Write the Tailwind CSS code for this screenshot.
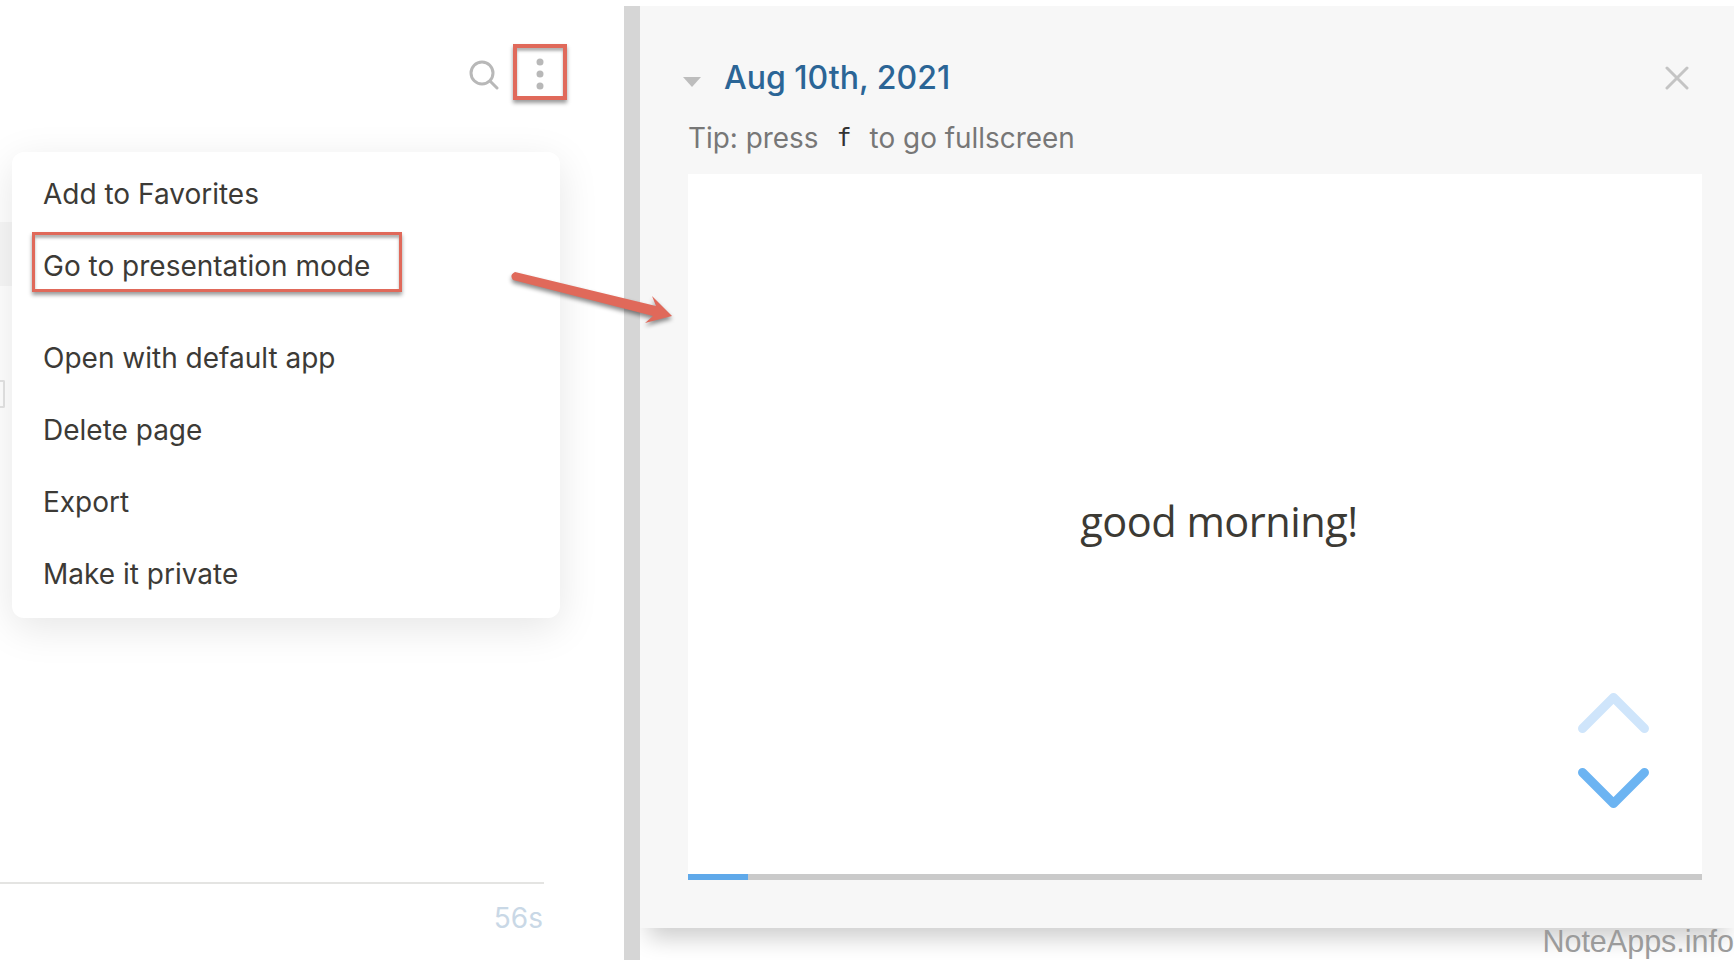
<!doctype html>
<html>
<head>
<meta charset="utf-8">
<script src="https://cdn.jsdelivr.net/npm/@tailwindcss/browser@4"></script>
</head>
<body class="bg-white">
<div class="relative flex h-[960px] w-[1734px] overflow-hidden bg-white font-['Inter',sans-serif]">
  <!-- left page -->
  <div class="flex h-full w-[624px] flex-col">
    <div class="flex h-[144px] items-start justify-end pt-[44px]">
      <div class="flex items-center gap-[12px] pr-[57px]">
        <svg class="h-[36px] w-[36px]" viewBox="0 0 36 36" fill="none" stroke="#b8b8b8" stroke-width="3" stroke-linecap="round"><circle cx="17" cy="19" r="11"/><path d="M25 27 L32 34"/></svg>
        <svg class="h-[56px] w-[54px]" viewBox="0 0 54 56" fill="#b8b8b8"><circle cx="27" cy="18" r="3.500"/><circle cx="27" cy="30" r="3.500"/><circle cx="27" cy="42" r="3.500"/></svg>
      </div>
    </div>
    <div class="h-[78px]"></div>
    <div class="h-[64px] w-[12px] bg-[#f7f7f7]"></div>
    <div class="h-[94px]"></div>
    <div class="h-[28px] w-[5px] rounded-r-[2px] border-2 border-l-0 border-[#e4e4e4]"></div>
    <div class="grow"></div>
    <div class="mr-[80px] h-[2px] bg-[#e4e4e2]"></div>
    <div class="flex h-[76px] items-start justify-end pr-[81px] pt-[16px] text-[28px] leading-[36px] text-[#c9d8e6]">56s</div>
  </div>

  <!-- divider -->
  <div class="relative z-10 mt-[6px] h-[954px] w-[16px] bg-[#d6d6d6]"></div>

  <!-- presentation panel -->
  <div class="h-[960px] flex-1 pt-[6px]">
    <div class="flex h-[922px] flex-col bg-[#f7f7f7] pl-[48px] pr-[32px] shadow-[0_18px_22px_-8px_rgba(0,0,0,0.2)]">
      <div class="flex h-[89px] shrink-0 items-end">
        <svg class="mb-[8px] -ml-[5px] h-[10px] w-[18px]" viewBox="0 0 18 10" fill="#bdbdbd"><path d="M0 0H18L9 10Z"/></svg>
        <span class="ml-[23px] text-[32px] font-medium leading-[34px] text-[#2b6596]">Aug 10th, 2021</span>
        <svg class="mb-[5px] ml-auto mr-[13px] h-[24px] w-[24px]" viewBox="0 0 24 24" fill="none" stroke="#c4c4c4" stroke-width="3" stroke-linecap="round"><path d="M2 2 L22 22 M22 2 L2 22"/></svg>
      </div>
      <div class="flex h-[79px] shrink-0 items-start pt-[26px] text-[27.900px] leading-[34px] text-[#777777]">
        <span>Tip: press</span>
        <span class="mx-[18px] font-['DejaVu_Sans_Mono',monospace] text-[25px] text-[#333333]">f</span>
        <span>to go fullscreen</span>
      </div>
      <div class="relative flex h-[706px] w-[1014px] shrink-0 flex-col bg-white">
        <div class="flex grow items-center justify-center pl-[48px] pb-[6px] font-['Open_Sans',sans-serif] text-[41.500px] tracking-[-0.5px] text-[#3c3a34]">good morning!</div>
        <div class="flex h-[6px] shrink-0 bg-[#cacaca]"><div class="h-full w-[60px] bg-[#5fa9ea]"></div></div>
        <svg class="absolute left-[890px] top-[519px] h-[115px] w-[71px]" viewBox="0 0 71 115" fill="none" stroke-width="9" stroke-linecap="round" stroke-linejoin="round"><path stroke="#cfe5fb" d="M4.500 35.500 L35.500 4.500 L66.500 35.500"/><path stroke="#6cb4f2" d="M4.500 79.500 L35.500 110.500 L66.500 79.500"/></svg>
      </div>
    </div>
  </div>

  <!-- menu -->
  <div class="absolute left-[12px] top-[152px] flex h-[466px] w-[548px] flex-col rounded-[12px] bg-white py-[6px] pl-[31px] text-[28px] text-[#3c3a36] shadow-[0_10px_40px_rgba(0,0,0,0.10)]">
    <div class="flex h-[72px] items-center">Add to Favorites</div>
    <div class="mb-[20px] flex h-[72px] items-center">Go to presentation mode</div>
    <div class="flex h-[72px] items-center">Open with default app</div>
    <div class="flex h-[72px] items-center">Delete page</div>
    <div class="flex h-[72px] items-center">Export</div>
    <div class="flex h-[72px] items-center">Make it private</div>
  </div>

  <!-- annotations -->
  <div class="absolute z-20 left-[513px] top-[44px] h-[56px] w-[54px] border-[4px] border-[#e0695a] shadow-[0_3px_4px_rgba(0,0,0,0.4),inset_0_3px_3px_rgba(0,0,0,0.3)]"></div>
  <div class="absolute z-20 left-[32px] top-[232px] h-[60px] w-[370px] border-[3px] border-[#e0695a] shadow-[0_3px_4px_rgba(0,0,0,0.4),inset_0_3px_3px_rgba(0,0,0,0.3)]"></div>
  <svg class="absolute z-20 left-[505px] top-[265px] h-[70px] w-[175px] drop-shadow-[0_3px_2px_rgba(0,0,0,0.45)]" viewBox="0 0 175 70">
    <path fill="#e0695a" d="M10 7 L151 41 L147 31 L167 51 L140 58 L148 51 L8 15 Q4 10 10 7Z"/>
  </svg>

  <div class="absolute z-20 right-0 top-[921px] font-['Liberation_Sans',sans-serif] text-[30.500px] leading-[40px] text-[#9b9b9b]">NoteApps.info</div>
</div>
</body>
</html>
